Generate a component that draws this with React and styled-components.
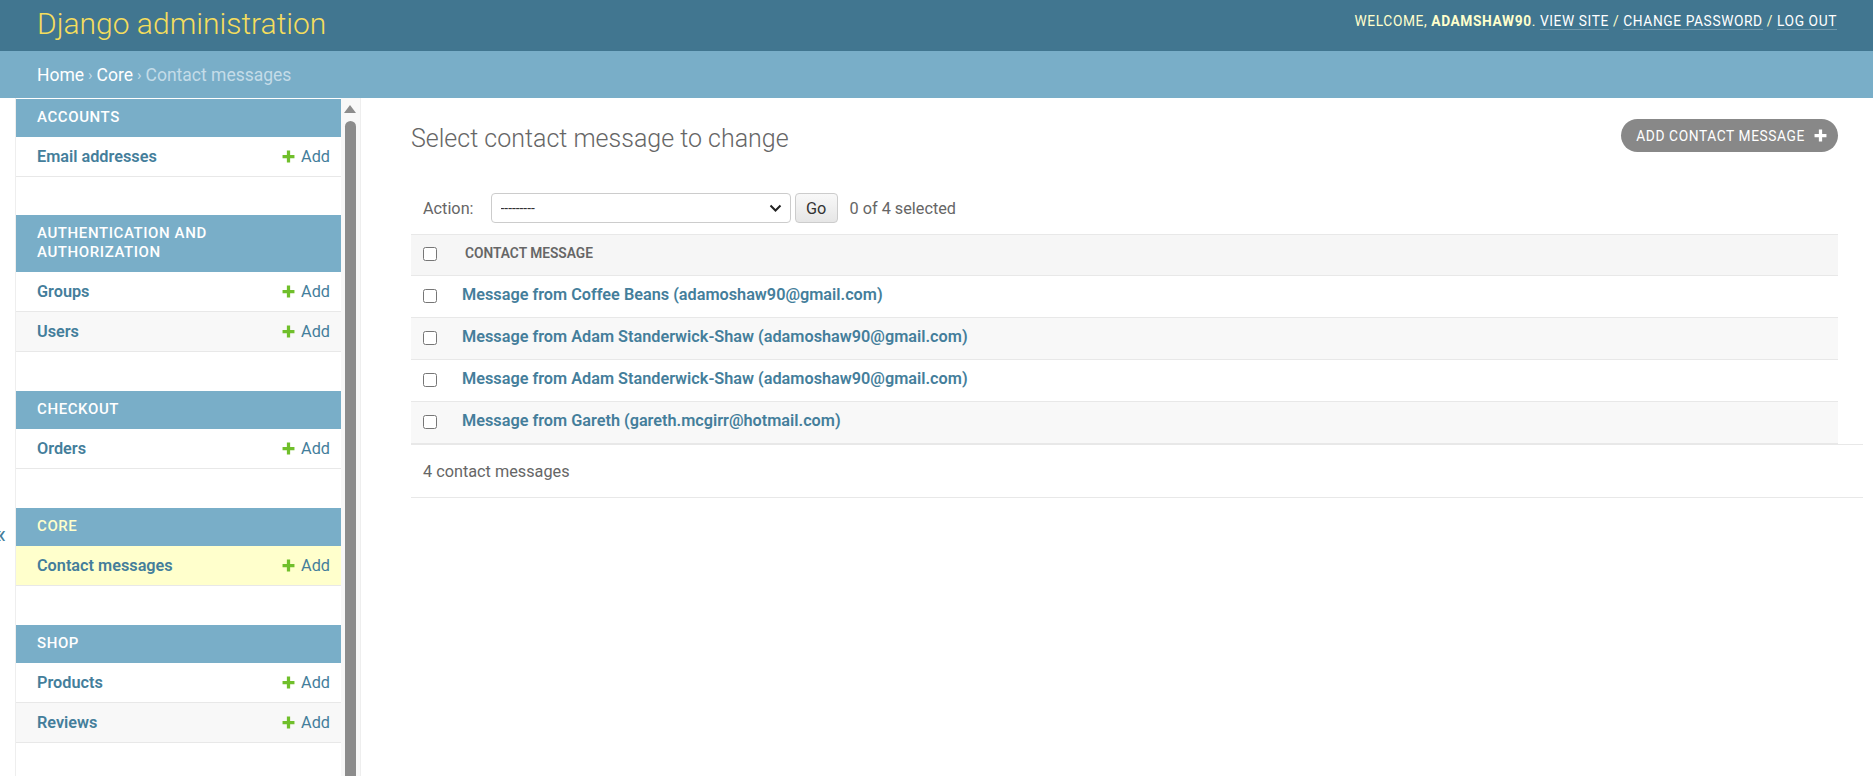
import * as React from "react";
import styled, { createGlobalStyle } from "styled-components";

const GlobalStyle = createGlobalStyle`
  html, body {
    margin: 0;
    padding: 0;
    height: 100%;
    overflow: hidden;
    background: #fff;
    font-family: Roboto, "Liberation Sans", "DejaVu Sans", sans-serif;
    color: #333;
  }
  * { box-sizing: border-box; }
`;

const Page = styled.div`
  display: flex;
  flex-direction: column;
  height: 100vh;
`;

const Header = styled.header`
  display: flex;
  align-items: center;
  justify-content: space-between;
  height: 51px;
  padding: 0 36px 0 37px;
  background: #417690;
`;

const Branding = styled.h1`
  margin: 0;
  font-size: 30px;
  font-weight: 300;
  color: #f5dd5d;
  line-height: 1;
  margin-top: -4px;
`;

const UserTools = styled.div`
  font-size: 13.75px;
  letter-spacing: 0.6px;
  text-transform: uppercase;
  color: #ffc;
  margin-top: -9px;
  strong {
    font-weight: 700;
  }
`;

const ToolLink = styled.a`
  color: #fff;
  text-decoration: none;
  border-bottom: 1px solid rgba(255, 255, 255, 0.25);
`;

const Breadcrumbs = styled.nav`
  display: flex;
  align-items: center;
  height: 47px;
  padding: 0 37px;
  background: #79aec8;
  font-size: 17.5px;
  color: #c4dce8;
`;

const Crumb = styled.a`
  color: #fff;
  text-decoration: none;
`;

const Sep = styled.span`
  margin: 0 4px;
  font-size: 15px;
`;

const Main = styled.div`
  display: flex;
  flex: 1;
  min-height: 0;
`;

const Toggle = styled.div`
  width: 16px;
  flex: none;
  border-right: 1px solid #eee;
  overflow: hidden;
  padding-top: 423px;
  color: #447e9b;
  font-size: 26px;
  line-height: 1;
`;

const ToggleGlyph = styled.span`
  display: block;
  margin-left: -6px;
`;

const Sidebar = styled.aside`
  display: flex;
  flex: none;
  width: 345px;
  border-right: 1px solid #eee;
`;

const NavList = styled.div`
  width: 326px;
  padding-top: 1px;
`;

const Module = styled.div`
  margin-bottom: 39px;
  &:first-child {
    margin-bottom: 38px;
  }
`;

const Caption = styled.div`
  padding: 9px 30px 10px 21px;
  line-height: 19px;
  background: #79aec8;
  color: ${(p) => (p.$current ? "#ffc" : "#fff")};
  font-size: 15px;
  font-weight: 500;
  letter-spacing: 0.6px;
  text-transform: uppercase;
`;

const ModelRow = styled.div`
  display: flex;
  align-items: center;
  justify-content: space-between;
  height: 40px;
  padding: 0 11px 0 21px;
  border-bottom: 1px solid #e8e8e8;
  background: ${(p) => (p.$selected ? "#ffc" : p.$alt ? "#f8f8f8" : "#fff")};
  font-size: 16.25px;
`;

const ModelLink = styled.a`
  color: #447e9b;
  font-weight: 600;
  text-decoration: none;
`;

const AddLink = styled.a`
  display: flex;
  align-items: center;
  gap: 6px;
  color: #447e9b;
  text-decoration: none;
  font-weight: 400;
`;

const ScrollTrack = styled.div`
  display: flex;
  flex-direction: column;
  align-items: flex-start;
  width: 19px;
  background: #f8f8f8;
  padding: 7px 0 0 4px;
  gap: 8px;
`;

const ScrollArrow = styled.div`
  width: 0;
  height: 0;
  margin-left: -1px;
  border-left: 6.5px solid transparent;
  border-right: 6.5px solid transparent;
  border-bottom: 8px solid #8c8c8c;
`;

const ScrollThumb = styled.div`
  flex: 1;
  width: 11px;
  background: #8c8c8c;
  border-radius: 6px 6px 0 0;
`;

const Content = styled.main`
  flex: 1;
  min-width: 0;
  padding: 21px 35px 0 50px;
`;

const TitleRow = styled.div`
  display: flex;
  justify-content: space-between;
  align-items: flex-start;
`;

const Title = styled.h1`
  margin: 0;
  padding-top: 5px;
  font-size: 25px;
  font-weight: 300;
  color: #666;
  line-height: 30px;
`;

const AddButton = styled.a`
  display: flex;
  align-items: center;
  gap: 9px;
  height: 33px;
  padding: 0 11px 0 15px;
  border-radius: 17px;
  background: #888;
  color: #fff;
  font-size: 13.75px;
  font-weight: 400;
  letter-spacing: 0.6px;
  text-transform: uppercase;
  text-decoration: none;
`;

const Actions = styled.div`
  display: flex;
  align-items: center;
  height: 32px;
  margin-top: 38px;
  padding-left: 12px;
  font-size: 16.25px;
  color: #666;
`;

const ActionLabel = styled.label`
  margin-right: 17px;
`;

const SelectWrap = styled.div`
  position: relative;
  width: 300px;
  height: 30px;
`;

const Select = styled.select`
  appearance: none;
  width: 100%;
  height: 100%;
  padding: 0 28px 0 9px;
  border: 1px solid #ccc;
  border-radius: 4px;
  background: #fff;
  font-family: inherit;
  font-size: 13.75px;
  color: #333;
`;

const Chevron = styled.svg`
  position: absolute;
  right: 9px;
  top: 10px;
  pointer-events: none;
`;

const GoButton = styled.button`
  width: 43px;
  height: 30px;
  margin-left: 4px;
  padding: 0;
  border: 1px solid #ccc;
  border-radius: 4px;
  background: linear-gradient(#f8f8f8, #e6e6e6);
  font-family: inherit;
  font-size: 16.25px;
  color: #333;
`;

const Counter = styled.span`
  margin-left: 12px;
  color: #666;
`;

const Table = styled.table`
  width: 100%;
  margin-top: 10px;
  border-collapse: collapse;
  border-bottom: 1px solid #e8e8e8;
`;

const HeadCell = styled.th`
  height: 41px;
  padding: 9px 0 0;
  vertical-align: top;
  background: #f6f6f6;
  border-top: 1px solid #e8e8e8;
  border-bottom: 1px solid #e8e8e8;
  text-align: left;
  font-size: 13.75px;
  line-height: 19px;
  font-weight: 600;
  color: #666;
  text-transform: uppercase;
  width: ${(p) => (p.$check ? "51px" : "auto")};
  padding-left: ${(p) => (p.$check ? "12px" : "3px")};
`;

const Row = styled.tr`
  background: ${(p) => (p.$alt ? "#f8f8f8" : "#fff")};
`;

const Cell = styled.td`
  height: 42px;
  padding: 9px 0 0;
  vertical-align: top;
  border-bottom: 1px solid #e8e8e8;
  font-size: 16.25px;
  line-height: 20px;
  padding-left: ${(p) => (p.$check ? "12px" : "0")};
`;

const Checkbox = styled.input`
  width: 14px;
  height: 14px;
  margin: 0;
  vertical-align: middle;
`;

const RowLink = styled.a`
  color: #447e9b;
  font-weight: 600;
  text-decoration: none;
`;

const Paginator = styled.div`
  display: flex;
  align-items: center;
  height: 54px;
  margin-right: -25px;
  padding-left: 12px;
  border-top: 1px solid #e8e8e8;
  border-bottom: 1px solid #e8e8e8;
  font-size: 16.25px;
  color: #666;
`;

const PlusIcon = ({ color = "#70bf2b", size = 13 }) => (
  <svg width={size} height={size} viewBox="0 0 12 12">
    <path d="M6 0.5v11M0.5 6h11" stroke={color} strokeWidth="3" />
  </svg>
);

const apps = [
  { name: "Accounts", models: ["Email addresses"] },
  { name: "Authentication and Authorization", models: ["Groups", "Users"] },
  { name: "Checkout", models: ["Orders"] },
  { name: "Core", current: true, models: ["Contact messages"] },
  { name: "Shop", models: ["Products", "Reviews"] },
];

const messages = [
  "Message from Coffee Beans (adamoshaw90@gmail.com)",
  "Message from Adam Standerwick-Shaw (adamoshaw90@gmail.com)",
  "Message from Adam Standerwick-Shaw (adamoshaw90@gmail.com)",
  "Message from Gareth (gareth.mcgirr@hotmail.com)",
];

const App = () => {
  return (
    <Page>
      <GlobalStyle />
      <Header>
        <Branding>Django administration</Branding>
        <UserTools>
          Welcome, <strong>adamshaw90</strong>. <ToolLink>View site</ToolLink>{" "}
          / <ToolLink>Change password</ToolLink> / <ToolLink>Log out</ToolLink>
        </UserTools>
      </Header>
      <Breadcrumbs>
        <Crumb>Home</Crumb>
        <Sep>›</Sep>
        <Crumb>Core</Crumb>
        <Sep>›</Sep>
        Contact messages
      </Breadcrumbs>
      <Main>
        <Toggle>
          <ToggleGlyph>«</ToggleGlyph>
        </Toggle>
        <Sidebar>
          <NavList>
            {apps.map((app) => (
              <Module key={app.name}>
                <Caption $current={app.current}>{app.name}</Caption>
                {app.models.map((model, i) => (
                  <ModelRow
                    key={model}
                    $alt={i % 2 === 1}
                    $selected={model === "Contact messages"}
                  >
                    <ModelLink>{model}</ModelLink>
                    <AddLink>
                      <PlusIcon />
                      Add
                    </AddLink>
                  </ModelRow>
                ))}
              </Module>
            ))}
          </NavList>
          <ScrollTrack>
            <ScrollArrow />
            <ScrollThumb />
          </ScrollTrack>
        </Sidebar>
        <Content>
          <TitleRow>
            <Title>Select contact message to change</Title>
            <AddButton>
              Add contact message
              <PlusIcon color="#fff" size={13} />
            </AddButton>
          </TitleRow>
          <Actions>
            <ActionLabel>Action:</ActionLabel>
            <SelectWrap>
              <Select defaultValue="">
                <option value="">---------</option>
              </Select>
              <Chevron width="13" height="10" viewBox="0 0 13 10">
                <path
                  d="M1.5 2.5l5 5 5-5"
                  fill="none"
                  stroke="#222"
                  strokeWidth="2"
                />
              </Chevron>
            </SelectWrap>
            <GoButton>Go</GoButton>
            <Counter>0 of 4 selected</Counter>
          </Actions>
          <Table>
            <thead>
              <tr>
                <HeadCell $check>
                  <Checkbox type="checkbox" />
                </HeadCell>
                <HeadCell>Contact message</HeadCell>
              </tr>
            </thead>
            <tbody>
              {messages.map((m, i) => (
                <Row key={i} $alt={i % 2 === 1}>
                  <Cell $check>
                    <Checkbox type="checkbox" />
                  </Cell>
                  <Cell>
                    <RowLink>{m}</RowLink>
                  </Cell>
                </Row>
              ))}
            </tbody>
          </Table>
          <Paginator>4 contact messages</Paginator>
        </Content>
      </Main>
    </Page>
  );
};

export default App;
